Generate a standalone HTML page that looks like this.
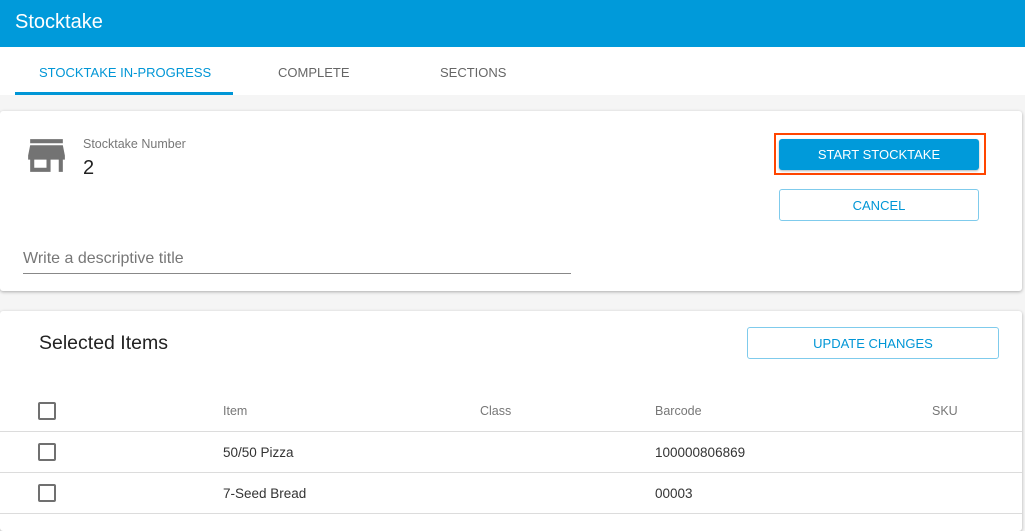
<!DOCTYPE html>
<html><head><meta charset="utf-8"><style>
*{box-sizing:border-box;margin:0;padding:0}
body{width:1025px;height:515px;overflow:hidden;background:#f5f5f5;font-family:"Liberation Sans",sans-serif;position:relative}
.a{position:absolute}
.hdr{left:0;top:0;width:1025px;height:47px;background:#009ada;color:#fff;font-size:20px;padding:11px 15px}
.tabs{left:0;top:47px;width:1025px;height:48px;background:#fff}
.tab{position:absolute;top:18px;font-size:13px;color:#666}
.card{background:#fff;border-radius:3px;box-shadow:0 1px 3px rgba(0,0,0,.3)}
.btn{position:absolute;border-radius:3px;font-size:13px;text-align:center;color:#0096d6;border:1px solid #7fcbec;background:#fff}
.cb{position:absolute;left:38px;width:18px;height:18px;border:2px solid #707070;border-radius:2px}
.line{position:absolute;left:0;width:1022px;height:1px;background:#dcdcdc}
.t{position:absolute;font-size:13.5px;color:#333}
.th{position:absolute;font-size:12.5px;color:#777}
</style></head><body>
<div class="a hdr">Stocktake</div>
<div class="a tabs">
<div class="tab" style="left:39px;color:#0096d6">STOCKTAKE IN-PROGRESS</div>
<div class="tab" style="left:278px">COMPLETE</div>
<div class="tab" style="left:440px">SECTIONS</div>
<div class="a" style="left:15px;top:45px;width:218px;height:3px;background:#0096d6"></div>
</div>
<div class="a card" style="left:0;top:111px;width:1022px;height:180px"></div>
<svg class="a" style="left:22px;top:131px" width="49" height="49" viewBox="0 0 24 24"><path fill="#737373" d="M20 4H4v2h16V4zm1 10v-2l-1-5H4l-1 5v2h1v6h10v-6h4v6h2v-6h1zm-9 4H6v-4h6v4z"/></svg>
<div class="a" style="left:83px;top:137px;font-size:12.5px;color:#777">Stocktake Number</div>
<div class="a" style="left:83px;top:157px;font-size:20px;color:#222">2</div>
<div class="a" style="left:23px;top:250px;font-size:16px;color:#777">Write a descriptive title</div>
<div class="a" style="left:23px;top:273px;width:548px;height:1px;background:#888"></div>
<div class="a" style="left:774px;top:133px;width:212px;height:42px;border:2px solid #ff4500"></div>
<div class="btn" style="left:779px;top:139px;width:200px;height:31px;background:#009ada;color:#fff;border:none;padding-top:8px;box-shadow:0 1px 2px rgba(0,0,0,.3)">START STOCKTAKE</div>
<div class="btn" style="left:779px;top:189px;width:200px;height:32px;padding-top:8px">CANCEL</div>
<div class="a card" style="left:0;top:311px;width:1022px;height:220px"></div>
<div class="a" style="left:39px;top:332px;font-size:19.5px;color:#222">Selected Items</div>
<div class="btn" style="left:747px;top:327px;width:252px;height:32px;padding-top:8px">UPDATE CHANGES</div>
<div class="cb" style="top:402px"></div>
<div class="th" style="left:223px;top:404px">Item</div>
<div class="th" style="left:480px;top:404px">Class</div>
<div class="th" style="left:655px;top:404px">Barcode</div>
<div class="th" style="left:932px;top:404px">SKU</div>
<div class="line" style="top:431px"></div>
<div class="cb" style="top:443px"></div>
<div class="t" style="left:223px;top:445px">50/50 Pizza</div>
<div class="t" style="left:655px;top:445px">100000806869</div>
<div class="line" style="top:472px"></div>
<div class="cb" style="top:484px"></div>
<div class="t" style="left:223px;top:486px">7-Seed Bread</div>
<div class="t" style="left:655px;top:486px">00003</div>
<div class="line" style="top:513px"></div>
</body></html>
